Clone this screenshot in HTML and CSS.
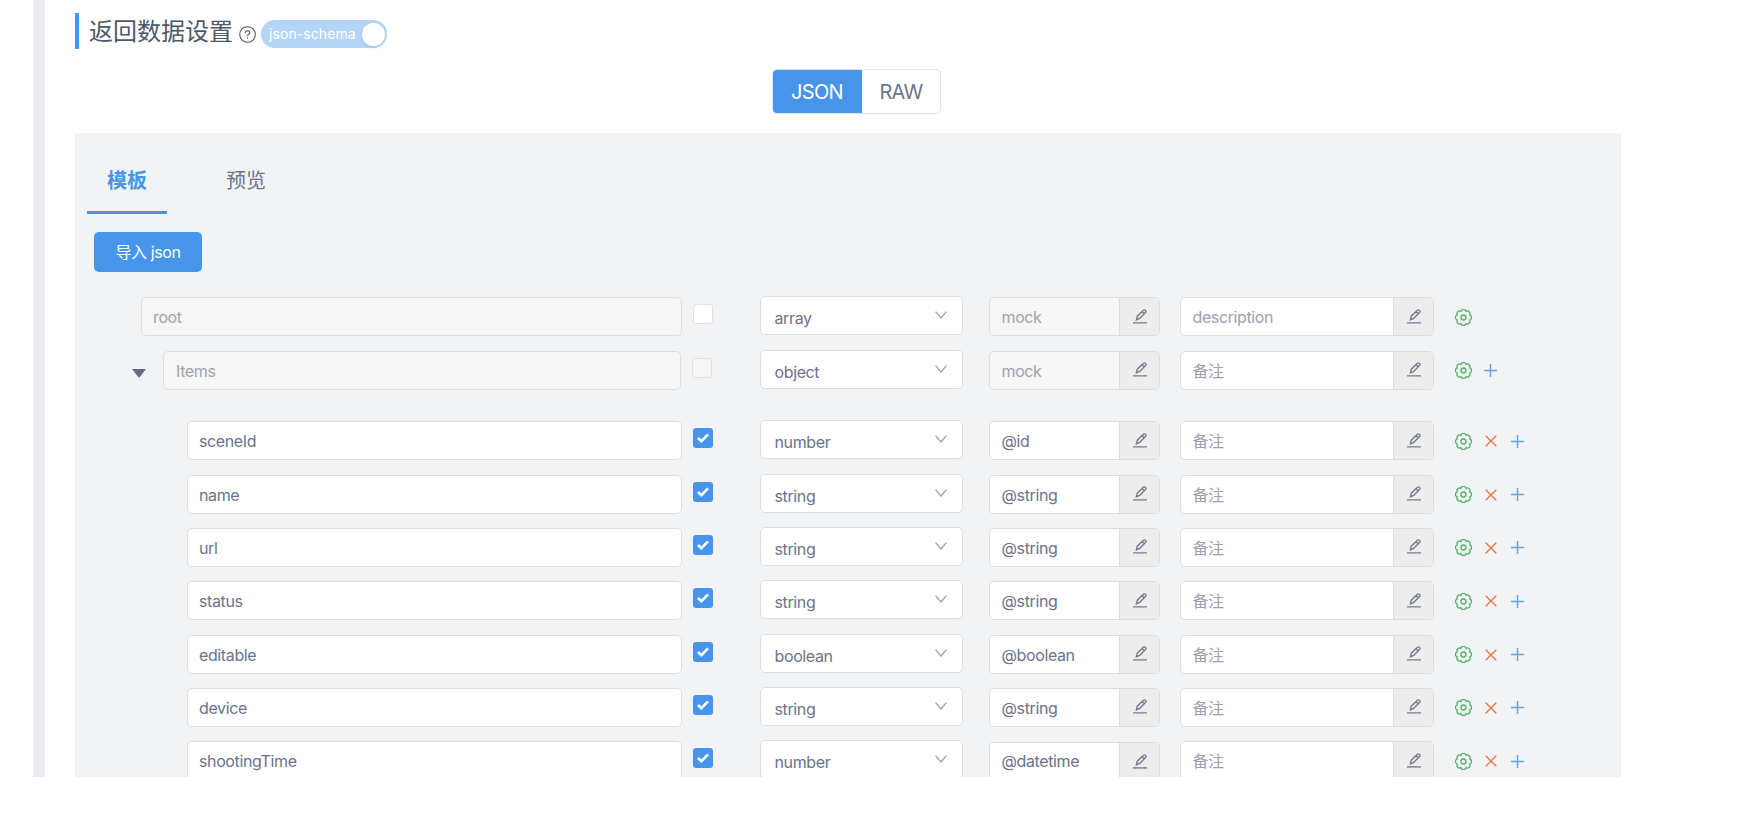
FILE: index.html
```
<!DOCTYPE html>
<html lang="zh-CN">
<head>
<meta charset="utf-8">
<title>返回数据设置</title>
<link rel="stylesheet" href="styles.css">
</head>
<body>
<svg class="sprite" aria-hidden="true">
  <symbol id="gear" viewBox="-8.5 -8.5 17 17"><path d="M6.2 -2.57A2.7 2.7 0 0 1 6.2 2.57A2.7 2.7 0 0 1 2.57 6.2A2.7 2.7 0 0 1 -2.57 6.2A2.7 2.7 0 0 1 -6.2 2.57A2.7 2.7 0 0 1 -6.2 -2.57A2.7 2.7 0 0 1 -2.57 -6.2A2.7 2.7 0 0 1 2.57 -6.2A2.7 2.7 0 0 1 6.2 -2.57Z"/><circle r="2.5"/></symbol>
  <symbol id="cross" viewBox="0 0 12 12"><path d="M.7 .7L11.3 11.3M11.3 .7L.7 11.3"/></symbol>
  <symbol id="plus" viewBox="0 0 13 13"><path d="M6.5 0V13M0 6.5H13"/></symbol>
  <symbol id="edit" viewBox="0 0 14 15"><path d="M0 13.9H14"/><path d="M3.4 10.8L4.3 7.2L10.4 1.3Q11.4 .4 12.5 1.4Q13.5 2.5 12.5 3.5L6.7 9.5ZM9.2 2.7L11.3 4.7"/></symbol>
  <symbol id="down" viewBox="0 0 12 8"><path d="M.6 .6L6 7L11.4 .6"/></symbol>
  <symbol id="check" viewBox="0 0 12 10"><path d="M1 5L4.4 8.2L11 1.4"/></symbol>
</svg>
<div class="page">
  <main class="content">
    <h2 class="title"><span>返回数据设置</span>
      <svg class="help" viewBox="0 0 17 17"><circle cx="8.5" cy="8.5" r="7.8"/><path d="M6.2 6.9Q6.3 4.7 8.5 4.7Q10.8 4.8 10.8 6.7Q10.8 8 9.4 8.6Q8.5 9 8.5 10.1"/><path d="M8.5 11.3V12.6"/></svg>
      <span class="switch">json-schema<i class="knob"></i></span>
    </h2>
    <div class="modes"><span class="mode mode-on">JSON</span><span class="mode">RAW</span></div>
    <section class="panel">
      <nav class="tabs"><span class="tab tab-on">模板</span><span class="tab">预览</span></nav>
      <button class="import">导入 json</button>
      <div class="rows">
        <div class="row root">
          <div class="name"><div class="input off">root</div></div><i class="box"></i>
          <div class="select"><span>array</span><svg class="down"><use href="#down"/></svg></div>
          <div class="group mock off"><span>mock</span><b><svg class="edit"><use href="#edit"/></svg></b></div>
          <div class="group desc"><span>description</span><b><svg class="edit"><use href="#edit"/></svg></b></div>
          <div class="acts"><svg class="gear"><use href="#gear"/></svg></div>
        </div>
        <div class="row items">
          <div class="name"><i class="caret"></i><div class="input off">Items</div></div><i class="box box-off"></i>
          <div class="select"><span>object</span><svg class="down"><use href="#down"/></svg></div>
          <div class="group mock off"><span>mock</span><b><svg class="edit"><use href="#edit"/></svg></b></div>
          <div class="group desc"><span>备注</span><b><svg class="edit"><use href="#edit"/></svg></b></div>
          <div class="acts"><svg class="gear"><use href="#gear"/></svg><svg class="plus"><use href="#plus"/></svg></div>
        </div>
        <div class="row">
          <div class="name"><div class="input">sceneId</div></div><i class="box box-on"><svg class="check"><use href="#check"/></svg></i>
          <div class="select"><span>number</span><svg class="down"><use href="#down"/></svg></div>
          <div class="group mock"><span>@id</span><b><svg class="edit"><use href="#edit"/></svg></b></div>
          <div class="group desc"><span>备注</span><b><svg class="edit"><use href="#edit"/></svg></b></div>
          <div class="acts"><svg class="gear"><use href="#gear"/></svg><svg class="cross"><use href="#cross"/></svg><svg class="plus"><use href="#plus"/></svg></div>
        </div>
        <div class="row">
          <div class="name"><div class="input">name</div></div><i class="box box-on"><svg class="check"><use href="#check"/></svg></i>
          <div class="select"><span>string</span><svg class="down"><use href="#down"/></svg></div>
          <div class="group mock"><span>@string</span><b><svg class="edit"><use href="#edit"/></svg></b></div>
          <div class="group desc"><span>备注</span><b><svg class="edit"><use href="#edit"/></svg></b></div>
          <div class="acts"><svg class="gear"><use href="#gear"/></svg><svg class="cross"><use href="#cross"/></svg><svg class="plus"><use href="#plus"/></svg></div>
        </div>
        <div class="row">
          <div class="name"><div class="input">url</div></div><i class="box box-on"><svg class="check"><use href="#check"/></svg></i>
          <div class="select"><span>string</span><svg class="down"><use href="#down"/></svg></div>
          <div class="group mock"><span>@string</span><b><svg class="edit"><use href="#edit"/></svg></b></div>
          <div class="group desc"><span>备注</span><b><svg class="edit"><use href="#edit"/></svg></b></div>
          <div class="acts"><svg class="gear"><use href="#gear"/></svg><svg class="cross"><use href="#cross"/></svg><svg class="plus"><use href="#plus"/></svg></div>
        </div>
        <div class="row">
          <div class="name"><div class="input">status</div></div><i class="box box-on"><svg class="check"><use href="#check"/></svg></i>
          <div class="select"><span>string</span><svg class="down"><use href="#down"/></svg></div>
          <div class="group mock"><span>@string</span><b><svg class="edit"><use href="#edit"/></svg></b></div>
          <div class="group desc"><span>备注</span><b><svg class="edit"><use href="#edit"/></svg></b></div>
          <div class="acts"><svg class="gear"><use href="#gear"/></svg><svg class="cross"><use href="#cross"/></svg><svg class="plus"><use href="#plus"/></svg></div>
        </div>
        <div class="row">
          <div class="name"><div class="input">editable</div></div><i class="box box-on"><svg class="check"><use href="#check"/></svg></i>
          <div class="select"><span>boolean</span><svg class="down"><use href="#down"/></svg></div>
          <div class="group mock"><span>@boolean</span><b><svg class="edit"><use href="#edit"/></svg></b></div>
          <div class="group desc"><span>备注</span><b><svg class="edit"><use href="#edit"/></svg></b></div>
          <div class="acts"><svg class="gear"><use href="#gear"/></svg><svg class="cross"><use href="#cross"/></svg><svg class="plus"><use href="#plus"/></svg></div>
        </div>
        <div class="row">
          <div class="name"><div class="input">device</div></div><i class="box box-on"><svg class="check"><use href="#check"/></svg></i>
          <div class="select"><span>string</span><svg class="down"><use href="#down"/></svg></div>
          <div class="group mock"><span>@string</span><b><svg class="edit"><use href="#edit"/></svg></b></div>
          <div class="group desc"><span>备注</span><b><svg class="edit"><use href="#edit"/></svg></b></div>
          <div class="acts"><svg class="gear"><use href="#gear"/></svg><svg class="cross"><use href="#cross"/></svg><svg class="plus"><use href="#plus"/></svg></div>
        </div>
        <div class="row">
          <div class="name"><div class="input">shootingTime</div></div><i class="box box-on"><svg class="check"><use href="#check"/></svg></i>
          <div class="select"><span>number</span><svg class="down"><use href="#down"/></svg></div>
          <div class="group mock low"><span>@datetime</span><b><svg class="edit"><use href="#edit"/></svg></b></div>
          <div class="group desc"><span>备注</span><b><svg class="edit"><use href="#edit"/></svg></b></div>
          <div class="acts"><svg class="gear"><use href="#gear"/></svg><svg class="cross"><use href="#cross"/></svg><svg class="plus"><use href="#plus"/></svg></div>
        </div>
      </div>
    </section>
  </main>
</div>
</body>
</html>
```
FILE: styles.css
```
* { box-sizing: border-box; }
body {
  margin: 0;
  height: 830px;
  overflow: hidden;
  background: #fff;
  color: #6c738b;
  font: 16px/24px Inter, "Noto Sans CJK SC", sans-serif;
  letter-spacing: -0.38px;
}
svg { display: block; flex: none; fill: none; stroke: currentColor; }
.sprite { width: 0; height: 0; position: absolute; }
.page {
  margin-left: 33px;
  height: 777px;
  overflow: hidden;
  border-left: 12px solid #ebecf1;
}
.content { padding: 13px 0 0 30px; }
.title {
  display: flex;
  align-items: center;
  margin: 0;
  height: 36px;
  padding-left: 10px;
  border-left: 4px solid #4795ea;
  color: #4d5869;
  font-size: 24px;
  font-weight: 400;
  letter-spacing: 0;
}
.title > span:first-child { padding-top: 2px; }
.help { width: 17px; height: 17px; margin: 6px 5px 0 6px; stroke-width: 1.1; }
.switch {
  display: flex;
  align-items: center;
  justify-content: space-between;
  width: 126px;
  height: 28px;
  margin-top: 6px;
  padding: 0 2px 0 8px;
  border-radius: 14px;
  background: #b5d5f7;
  color: #fff;
  font-size: 14px;
  letter-spacing: 0.08px;
}
.knob { width: 23px; height: 23px; border-radius: 50%; background: #fff; box-shadow: 0 2px 4px rgba(0, 35, 11, .08); }
.modes {
  display: flex;
  width: 169px;
  height: 45px;
  margin: 20px 0 19px 697px;
  border: 1px solid #e1e2e4;
  border-radius: 5px;
  overflow: hidden;
}
.mode { flex: 1; text-align: center; font-size: 20px; line-height: 45px; letter-spacing: -0.7px; }
.mode-on { flex: 0 0 90px; margin: -1px 0 -1px -1px; line-height: 47px; background: #4795ea; color: #fff; }
.panel { width: 1546px; height: 700px; background: #f2f3f5; }
.tabs { display: flex; gap: 39px; padding-left: 12px; height: 81px; }
.tab { width: 80px; padding-top: 34px; text-align: center; font-size: 20px; line-height: 28px; letter-spacing: 0; }
.tab-on { border-bottom: 3px solid #4795ea; color: #4795ea; font-weight: 700; }
.import {
  display: block;
  width: 108px;
  height: 40px;
  margin: 18px 0 23.3px 19px;
  padding: 0;
  border: 0;
  border-radius: 5px;
  background: #4795ea;
  color: #fff;
  font: inherit;
  letter-spacing: -0.4px;
}
.row { display: flex; align-items: flex-start; height: 53.33px; }
.name { position: relative; width: 607px; padding: 2px 0 0 112px; }
.root .name { padding-left: 66px; }
.items { height: 70.6px; }
.items .name { width: 606px; padding-left: 88px; }
.input, .select, .group { height: 39px; border: 1px solid #dcdddf; border-radius: 5px; background: #fff; line-height: 38px; }
.input { padding-left: 11px; }
.items .input { padding-left: 12px; }
.off, .off.group { background: #f6f6f6; color: #9ea2b1; }
.caret {
  position: absolute;
  left: 57px;
  top: 20px;
  border: 7px solid transparent;
  border-top: 9px solid #646c84;
  border-bottom: 0;
}
.box { display: flex; align-items: center; justify-content: center; width: 20px; height: 20px; margin: 9px 0 0 11px; border: 1px solid #dfe0e2; border-radius: 3px; background: #fff; }
.box-off { margin-right: 1px; background: #f6f6f6; }
.box-on { border: 0; background: #4795ea; color: #fff; }
.check { width: 12px; height: 10px; stroke-width: 2.6; }
.select { display: flex; justify-content: space-between; width: 203px; margin: 1px 0 0 47px; padding: 0 15px 0 13.5px; }
.select span { padding-top: 2px; }
.down { width: 12px; height: 8px; margin-top: 14px; color: #a2a6b2; stroke-width: 1.4; }
.group { display: flex; justify-content: space-between; margin-top: 2px; overflow: hidden; }
.group span { padding-left: 11.5px; }
.group b { display: flex; justify-content: center; width: 40px; padding-top: 10.5px; border-left: 1px solid #dcdddf; background: #ededee; color: #747b8c; }
.mock { width: 171px; margin-left: 26px; }
.low { margin-top: 3px; }
.low span { line-height: 37px; }
.desc { width: 254px; margin-left: 20px; }
.desc span { color: #9ca0ae; }
.edit { width: 14px; height: 15px; stroke-width: 1.4; }
.acts { display: flex; align-items: center; height: 40px; margin: 2px 0 0 21px; }
.gear { width: 17px; height: 17px; color: #57ae67; stroke-width: 1.3; }
.cross { width: 12px; height: 12px; margin-left: 12.5px; color: #ed754d; stroke-width: 1.4; }
.plus { width: 13px; height: 13px; margin-left: 12px; color: #62a2eb; stroke-width: 1.4; }
.cross + .plus { margin-left: 14.5px; }
```
